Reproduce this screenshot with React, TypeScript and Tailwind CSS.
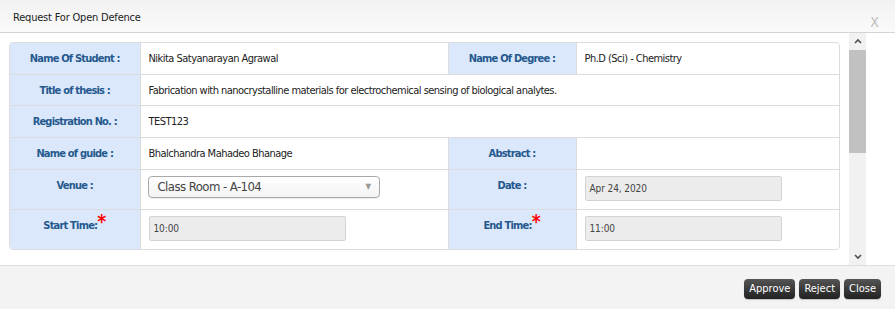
import React from "react";

const font = { fontFamily: "'DejaVu Sans Condensed', 'DejaVu Sans', sans-serif" };

function Label({ children, star, w }: { children: React.ReactNode; star?: boolean; w?: string }) {
  return (
    <td className={`${w ?? "w-[130px]"} bg-[#dbe8fb] border border-[#dcdcdc] align-top pt-[9px] text-center text-[11px] font-bold text-[#25598e] leading-[13px] tracking-[-0.8px]`}>
      {children}
      {star && <span className="text-[#ff0000] text-[19px] font-bold leading-[0] relative top-[-1px] tracking-normal">*</span>}
    </td>
  );
}

function Value({ children, colSpan, w }: { children?: React.ReactNode; colSpan?: number; w?: string }) {
  return (
    <td colSpan={colSpan} className={`border border-[#dcdcdc] align-top pt-[9px] pl-[8px] text-[11px] text-[#222] leading-[13px] tracking-[-0.53px] ${w ?? ""}`}>
      {children}
    </td>
  );
}

function InputBox({ value }: { value: string }) {
  return (
    <div className="w-[197px] h-[25px] bg-[#ececec] border border-[#d3d3d3] rounded-[2px] flex items-center pl-[4px] text-[10px] text-[#444] tracking-[-0.1px] -mt-[2px]">
      {value}
    </div>
  );
}

export default function App() {
  return (
    <div className="w-[895px] h-[309px] bg-white flex flex-col overflow-hidden" style={font}>
      <div className="h-[33px] shrink-0 bg-gradient-to-b from-[#f2f2f2] to-[#fafafa] border-b border-[#d4d4d4] flex items-start justify-between pl-[13px] pr-[16px]">
        <span className="text-[11px] text-[#222] mt-[10px] tracking-[-0.2px]">Request For Open Defence</span>
        <span className="text-[14px] text-[#bdbdbd] mt-[12px]">X</span>
      </div>
      <div className="flex-1 flex min-h-0">
        <div className="flex-1 pl-[9px] pr-[9px] pt-[9px]">
          <div className="border border-[#dcdcdc] rounded-[4px] overflow-hidden">
            <table className="w-full border-collapse border-hidden">
              <tbody>
                <tr className="h-[31px]">
                  <Label>Name Of Student :</Label>
                  <Value w="w-[308px]">Nikita Satyanarayan Agrawal</Value>
                  <Label w="w-[128px]">Name Of Degree :</Label>
                  <Value>Ph.D (Sci) - Chemistry</Value>
                </tr>
                <tr className="h-[31px]">
                  <Label>Title of thesis :</Label>
                  <Value colSpan={3}>Fabrication with nanocrystalline materials for electrochemical sensing of biological analytes.</Value>
                </tr>
                <tr className="h-[32px]">
                  <Label>Registration No. :</Label>
                  <Value colSpan={3}>TEST123</Value>
                </tr>
                <tr className="h-[32px]">
                  <Label>Name of guide :</Label>
                  <Value>Bhalchandra Mahadeo Bhanage</Value>
                  <Label w="w-[128px]">Abstract :</Label>
                  <Value></Value>
                </tr>
                <tr className="h-[40px]">
                  <Label>Venue :</Label>
                  <td className="border border-[#dcdcdc] align-top pt-[6px] pl-[7px]">
                    <div className="w-[232px] h-[22px] rounded-[4px] border border-[#a9a9a9] bg-gradient-to-b from-white to-[#f3f3f3] flex items-center justify-between pl-[9px] pr-[8px] text-[13px] text-[#444] tracking-[-0.55px] shadow-[0_1px_1px_rgba(0,0,0,0.08)]">
                      <span>Class Room - A-104</span>
                      <span className="text-[8px] text-[#999]">▼</span>
                    </div>
                  </td>
                  <Label w="w-[128px]">Date :</Label>
                  <td className="border border-[#dcdcdc] align-top pt-[8px] pl-[8px]">
                    <InputBox value="Apr 24, 2020" />
                  </td>
                </tr>
                <tr className="h-[40px]">
                  <Label star>Start Time:</Label>
                  <td className="border border-[#dcdcdc] align-top pt-[8px] pl-[8px]">
                    <InputBox value="10:00" />
                  </td>
                  <Label star w="w-[128px]">End Time:</Label>
                  <td className="border border-[#dcdcdc] align-top pt-[8px] pl-[8px]">
                    <InputBox value="11:00" />
                  </td>
                </tr>
              </tbody>
            </table>
          </div>
        </div>
        <div className="w-[17px] mr-[29px] bg-[#f1f1f1] flex flex-col items-center">
          <div className="h-[16px] flex items-center justify-center">
            <svg width="8" height="6" viewBox="0 0 8 6"><path d="M1 5 L4 2 L7 5" stroke="#505050" strokeWidth="1.6" fill="none" /></svg>
          </div>
          <div className="w-full h-[103px] bg-[#c1c1c1] mt-[1px]" />
          <div className="flex-1" />
          <div className="h-[16px] flex items-center justify-center">
            <svg width="8" height="6" viewBox="0 0 8 6"><path d="M1 1 L4 4 L7 1" stroke="#505050" strokeWidth="1.6" fill="none" /></svg>
          </div>
        </div>
      </div>
      <div className="h-[44px] shrink-0 bg-[#f3f3f3] border-t border-[#dedede] flex items-start justify-end pr-[14px] pt-[13px] gap-[4px]">
        {["Approve", "Reject", "Close"].map((b) => (
          <button key={b} className="h-[20px] px-[5px] rounded-[4px] bg-gradient-to-b from-[#555] to-[#222] text-white text-[11px] leading-[20px] shadow-[0_1px_1px_rgba(0,0,0,0.2)]">
            {b}
          </button>
        ))}
      </div>
    </div>
  );
}
